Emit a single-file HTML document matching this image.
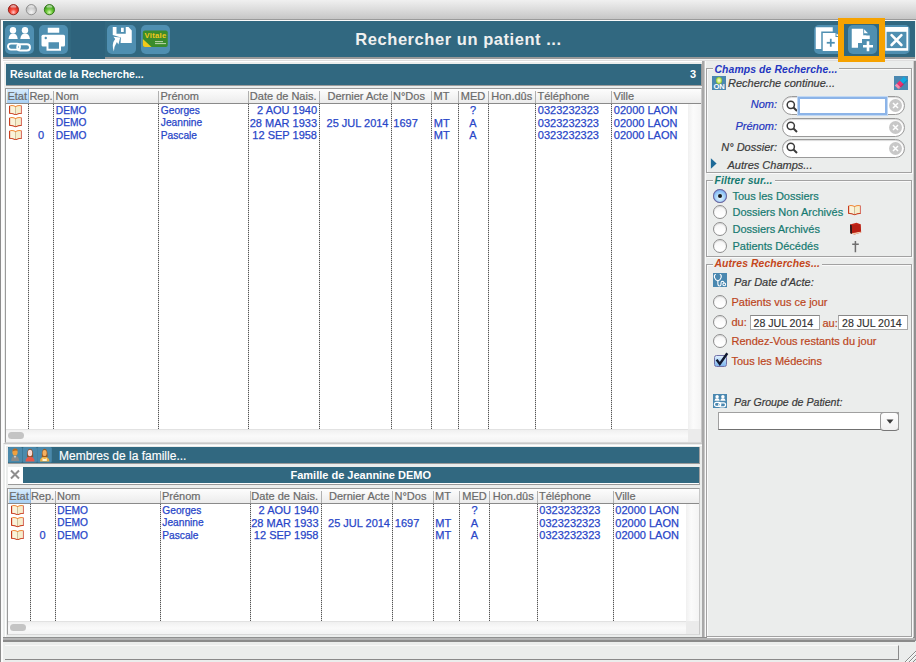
<!DOCTYPE html>
<html><head><meta charset="utf-8"><style>
*{margin:0;padding:0;box-sizing:border-box}
html,body{width:916px;height:662px;overflow:hidden;background:#ebedec;font-family:"Liberation Sans",sans-serif;font-size:11px}
.a{position:absolute}
.th{height:15px;line-height:15px;color:#6a6a6a;font-size:11px;white-space:nowrap;-webkit-text-stroke:0.2px #6a6a6a}
.thr{background:linear-gradient(#fdfdfd,#f2f2f2 60%,#e9e9e9)}
.dot{width:1px;background:repeating-linear-gradient(#555 0 1px,#d4d4d4 1px 2px)}
.row{height:12.5px;line-height:12.5px;color:#2846c8;white-space:nowrap;-webkit-text-stroke:0.25px #2846c8}
.tile{position:absolute;top:25px;width:29px;height:29px;border-radius:5px;background:#4f8fb1}
.tl{position:absolute;top:3.5px;width:12px;height:12px;border-radius:50%}
.teal{background:#316880}
.lg{position:absolute;font-weight:bold;font-style:italic;white-space:nowrap;background:#ebedec;padding:0 2px;letter-spacing:0.1px}
.fs{position:absolute;border:1px solid #a2a2a2;box-shadow:inset 1px 1px 0 #fafafa, 1px 1px 0 #fafafa}
.lbl{position:absolute;white-space:nowrap;font-style:italic;-webkit-text-stroke:0.2px currentColor}
.radio{position:absolute;width:14px;height:14px;border-radius:50%;border:1px solid #8e8e8e;background:linear-gradient(#f4f4f4,#fdfdfd 60%,#ffffff);box-shadow:inset 0 1px 1px rgba(0,0,0,.12)}
.srch{position:absolute;height:19px;border-radius:10px;border:1px solid #9a9a9a;background:#fff;box-shadow:inset 0 1px 1px rgba(0,0,0,.15)}
</style></head><body>
<div class="a" style="left:0;top:0;width:916px;height:20px;background:linear-gradient(#f0f0f0 0,#dedede 45%,#c6c6c6 100%);border-bottom:1px solid #9a9a9a"></div>
<svg class="a" style="left:0;top:0" width="60" height="20" viewBox="0 0 60 20"><defs><radialGradient id="gr" cx="50%" cy="75%" r="60%"><stop offset="0" stop-color="#ffc8c8"/><stop offset="0.5" stop-color="#f84838"/><stop offset="1" stop-color="#c82a20"/></radialGradient><radialGradient id="gg" cx="50%" cy="75%" r="60%"><stop offset="0" stop-color="#f4f4f4"/><stop offset="0.5" stop-color="#d8d8d8"/><stop offset="1" stop-color="#b8b8b8"/></radialGradient><radialGradient id="gn" cx="50%" cy="75%" r="60%"><stop offset="0" stop-color="#d8f8b8"/><stop offset="0.5" stop-color="#6cc838"/><stop offset="1" stop-color="#3c9a1a"/></radialGradient><linearGradient id="hl" x1="0" y1="0" x2="0" y2="1"><stop offset="0" stop-color="#fff" stop-opacity="0.85"/><stop offset="1" stop-color="#fff" stop-opacity="0"/></linearGradient></defs><circle cx="13.4" cy="9.7" r="5.1" fill="url(#gr)" stroke="#8c1e16" stroke-width="0.9"/><ellipse cx="13.4" cy="7" rx="3" ry="1.8" fill="url(#hl)"/><circle cx="31.3" cy="9.7" r="5.1" fill="url(#gg)" stroke="#8a8a8a" stroke-width="0.9"/><ellipse cx="31.3" cy="7" rx="3" ry="1.8" fill="url(#hl)"/><circle cx="49.4" cy="9.7" r="5.1" fill="url(#gn)" stroke="#2e6e16" stroke-width="0.9"/><ellipse cx="49.4" cy="7" rx="3" ry="1.8" fill="url(#hl)"/></svg>
<div class="a" style="left:1px;top:20px;width:915px;height:1px;background:#fafafa"></div>
<div class="a teal" style="left:2.5px;top:21px;width:912.2px;height:36px"></div>
<div class="a" style="left:2.5px;top:57px;width:912.2px;height:1.6px;background:#999"></div>
<div class="a" style="left:71px;top:20.5px;width:34px;height:38.5px;background:#2e637c"></div>
<div class="a" style="left:0;top:21px;width:916px;height:36px;text-align:center;line-height:37px;color:#f0f0f0;font-weight:bold;font-size:16.5px;letter-spacing:0.55px;padding-left:1px">Rechercher un patient ...</div>
<div class="tile" style="left:5.25px"></div>
<svg class="a" style="left:5.25px;top:25px" width="29" height="29" viewBox="0 0 29 29"><circle cx="8" cy="5.2" r="3.2" fill="#fff"/><path d="M3.5 14 Q4.2 8.6 8.1 8.6 Q12 8.6 12.75 14 Z" fill="#fff"/><circle cx="20" cy="5.2" r="3.2" fill="#fff"/><path d="M15.25 14 Q16 8.6 20.1 8.6 Q24.2 8.6 25 14 Z" fill="#fff"/><rect x="3" y="18.6" width="12" height="6" rx="3" fill="none" stroke="#fff" stroke-width="1.9"/><rect x="12.2" y="19.3" width="12.8" height="6.2" rx="3.1" fill="none" stroke="#fff" stroke-width="1.9"/></svg>
<div class="tile" style="left:39.25px"></div>
<svg class="a" style="left:39.25px;top:25px" width="29" height="29" viewBox="0 0 29 29"><rect x="8.75" y="2.75" width="11.5" height="5" fill="#fff"/><rect x="2.5" y="9.75" width="23.5" height="11.75" rx="1.5" fill="#fff"/><rect x="7.5" y="17" width="14.5" height="8.75" fill="#fff"/><rect x="9.5" y="17.25" width="10.5" height="6.5" fill="#4f8fb1"/><circle cx="6.75" cy="13" r="1.2" fill="#4f8fb1"/></svg>
<div class="tile" style="left:107.25px"></div>
<svg class="a" style="left:107.25px;top:25px" width="29" height="29" viewBox="0 0 29 29"><path d="M5.75 2 L21.5 2 L24.75 5.5 L24.75 18 L13.6 18 L13.9 12.4 L5.75 10 Z" fill="#fff"/><path d="M9.5 2 L18.75 2 L18.75 8.75 L9.5 8.75 Z" fill="#4f8fb1"/><rect x="14" y="2.75" width="2.75" height="4.25" fill="#fff"/><path d="M13.2 12.5 L6.4 11.7 L8.2 14.1 Q4.2 19 6.9 26.6 Q7 21.2 9.9 16.9 L11.4 19.6 Z" fill="#fff"/></svg>
<div class="tile" style="left:141.25px"></div>
<svg class="a" style="left:141.25px;top:25px" width="29" height="29" viewBox="0 0 29 29"><rect x="1.85" y="5.4" width="24.9" height="16.6" rx="2" fill="#3a8c2c"/><path d="M1.85 14 L10.5 22 L3.85 22 Q1.85 22 1.85 20 Z" fill="#f2c81a"/><text x="14.5" y="13.4" text-anchor="middle" font-family="Liberation Sans" font-weight="bold" font-size="7.6" fill="#f2c81a" letter-spacing="0.3">Vitale</text><rect x="14" y="16.2" width="8" height="0.9" fill="#cfe0c0"/><rect x="14" y="18.2" width="11" height="0.9" fill="#cfe0c0"/></svg>
<div class="tile" style="left:814.25px"></div>
<svg class="a" style="left:814.25px;top:25px" width="29" height="29" viewBox="0 0 29 29"><rect x="1.75" y="2.25" width="17" height="21.75" fill="#fff"/><path d="M7.25 6.5 L22 6.5 L27 11 L27 27 L7.25 27 Z" fill="#4f8fb1"/><path d="M8.75 8 L21.5 8 L21.5 12 L26 12 L26 26 L8.75 26 Z" fill="#fff"/><path d="M22.5 8.5 L25.5 11 L22.5 11 Z" fill="#fff"/><rect x="12.75" y="16.9" width="8" height="1.75" fill="#4f8fb1"/><rect x="15.9" y="13.75" width="1.75" height="8" fill="#4f8fb1"/></svg>
<div class="tile" style="left:847.75px"></div>
<svg class="a" style="left:847.75px;top:25px" width="29" height="29" viewBox="0 0 29 29"><path d="M3.75 3.75 L15.25 3.75 L15.25 10.5 L18.25 10.5 L18.25 14 L14 14 L14 18 L10 18 L10 22.75 L3.75 22.75 Z" fill="#fff"/><path d="M16.1 4.3 L20 8.2 L16.1 8.2 Z" fill="#fff"/><path d="M15 21.2 L25 21.2 M20 16.2 L20 26.2" stroke="#fff" stroke-width="2.6"/><rect x="15.25" y="10.5" width="6.5" height="3.5" fill="#fff"/></svg>
<div class="tile" style="left:880.75px"></div>
<svg class="a" style="left:880.75px;top:25px" width="29" height="29" viewBox="0 0 29 29"><rect x="4.25" y="2" width="23" height="23.75" fill="#fff"/><rect x="5.6" y="6.8" width="19.8" height="16.3" fill="#4f8fb1"/><path d="M10.6 10.2 L20.4 20 M20.4 10.2 L10.6 20" stroke="#fff" stroke-width="2.6" stroke-linecap="round"/></svg>
<div class="a" style="left:0;top:59px;width:916px;height:1px;background:#f6f6f6"></div>
<div class="a" style="left:0;top:60px;width:916px;height:1px;background:#dedede"></div>
<div class="a" style="left:3px;top:61px;width:700px;height:383px;border-top:1px solid #fff;border-left:1px solid #fff;border-right:1px solid #bdbdbd;border-bottom:1px solid #c8c8c8"></div>
<div class="a teal" style="left:6px;top:64px;width:696px;height:21.5px;border-right:1px solid #9c9c9c;border-bottom:1.5px solid #9c9c9c"></div>
<div class="a" style="left:10px;top:64px;height:20px;line-height:20px;color:#fff;font-weight:bold;font-size:10.5px">Résultat de la Recherche...</div>
<div class="a" style="left:680px;top:64px;width:16px;height:20px;line-height:20px;color:#fff;font-weight:bold;font-size:11px;text-align:right">3</div>
<div class="a" style="left:5px;top:88px;width:697px;height:354.5px;border:1px solid #9a9a9a;border-right-color:#c8c8c8;border-bottom-color:#d8d8d8;background:#fff"></div>
<div class="a thr" style="left:6px;top:89px;width:695px;height:15px"></div>
<div class="a" style="left:6.5px;top:89px;width:22.5px;height:14px;background:linear-gradient(#d8ecfc,#a8d0f4);border-right:1px solid #90b8e0"></div>
<div class="a th" style="left:6px;width:22.5px;text-align:center;top:89px">Etat</div>
<div class="a th" style="left:28.5px;width:25.0px;text-align:center;top:89px">Rep.</div>
<div class="a th" style="left:55.5px;top:89px">Nom</div>
<div class="a th" style="left:160.5px;top:89px">Prénom</div>
<div class="a th" style="left:248.5px;width:68.0px;text-align:right;top:89px">Date de Nais.</div>
<div class="a th" style="left:319.5px;width:68.5px;text-align:right;top:89px">Dernier Acte</div>
<div class="a th" style="left:393px;top:89px">N°Dos</div>
<div class="a th" style="left:433.5px;top:89px">MT</div>
<div class="a th" style="left:458px;width:30px;text-align:center;top:89px">MED</div>
<div class="a th" style="left:488px;width:47.5px;text-align:center;top:89px">Hon.dûs</div>
<div class="a th" style="left:537.5px;top:89px">Téléphone</div>
<div class="a th" style="left:613.5px;top:89px">Ville</div>
<div class="a" style="left:53.0px;top:91px;width:1px;height:12px;background:#b0b0b0"></div>
<div class="a" style="left:158.0px;top:91px;width:1px;height:12px;background:#b0b0b0"></div>
<div class="a" style="left:248.0px;top:91px;width:1px;height:12px;background:#b0b0b0"></div>
<div class="a" style="left:319.0px;top:91px;width:1px;height:12px;background:#b0b0b0"></div>
<div class="a" style="left:390.5px;top:91px;width:1px;height:12px;background:#b0b0b0"></div>
<div class="a" style="left:431.0px;top:91px;width:1px;height:12px;background:#b0b0b0"></div>
<div class="a" style="left:457.5px;top:91px;width:1px;height:12px;background:#b0b0b0"></div>
<div class="a" style="left:487.5px;top:91px;width:1px;height:12px;background:#b0b0b0"></div>
<div class="a" style="left:535.0px;top:91px;width:1px;height:12px;background:#b0b0b0"></div>
<div class="a" style="left:611.0px;top:91px;width:1px;height:12px;background:#b0b0b0"></div>
<div class="a" style="left:6px;top:103px;width:695px;height:1px;background:#8a8a8a"></div>
<div class="a" style="left:688px;top:104px;width:13px;height:324.5px;background:linear-gradient(90deg,#f0f0f0,#fbfbfb 40%,#f4f4f4)"></div>
<div class="a" style="left:6px;top:428.5px;width:695px;height:13px;background:linear-gradient(#f0f0f0,#fafafa 50%,#f3f3f3);border-top:1px solid #e2e2e2"></div>
<div class="a" style="left:688px;top:428.5px;width:13px;height:13px;background:#ebebeb"></div>
<div class="a" style="left:8px;top:431.5px;width:16px;height:7px;border-radius:4px;background:#c4c4c4"></div>
<div class="a dot" style="left:28.0px;top:104px;height:324.5px"></div>
<div class="a dot" style="left:53.0px;top:104px;height:324.5px"></div>
<div class="a dot" style="left:158.0px;top:104px;height:324.5px"></div>
<div class="a dot" style="left:248.0px;top:104px;height:324.5px"></div>
<div class="a dot" style="left:319.0px;top:104px;height:324.5px"></div>
<div class="a dot" style="left:390.5px;top:104px;height:324.5px"></div>
<div class="a dot" style="left:431.0px;top:104px;height:324.5px"></div>
<div class="a dot" style="left:457.5px;top:104px;height:324.5px"></div>
<div class="a dot" style="left:487.5px;top:104px;height:324.5px"></div>
<div class="a dot" style="left:535.0px;top:104px;height:324.5px"></div>
<div class="a dot" style="left:611.0px;top:104px;height:324.5px"></div>
<svg class="a" style="left:8.8px;top:104.7px" width="13.2" height="10.4" viewBox="0 0 13 10.2"><path d="M0 0.8 L0 8.6 Q3.5 8.6 6.5 10.2 Q9.5 8.6 13 8.6 L13 0.8 L11.6 0.8 L11.6 7.6 Q9 7.6 6.5 8.6 Q4 7.6 1.4 7.6 L1.4 0.8 Z" fill="#c83c1c"/><path d="M11.6 0.8 L13 0.8 L13 8.6 L11.6 8.2 Z" fill="#d87468"/><path d="M1.4 0.7 Q4 0.1 6.5 1.6 L6.5 9 Q4 7.7 1.4 7.8 Z" fill="#faf3da"/><path d="M11.6 0.7 Q9 0.1 6.5 1.6 L6.5 9 Q9 7.7 11.6 7.8 Z" fill="#f6eecc"/><rect x="6.1" y="1.6" width="0.8" height="7.3" fill="#c4b48c"/><path d="M1.2 0.7 Q4 0.1 6.5 1.6 Q9 0.1 11.8 0.7" stroke="#f08a3a" stroke-width="1" fill="none"/></svg>
<div class="a row" style="left:55.8px;top:104.7px;font-size:10.2px">DEMO</div>
<div class="a row" style="left:160.8px;top:104.7px;font-size:10.2px">Georges</div>
<div class="a row" style="left:248.5px;top:104.0px;width:68.5px;text-align:right">2 AOU 1940</div>
<div class="a row" style="left:458px;top:104.0px;width:30px;text-align:center">?</div>
<div class="a row" style="left:537.8px;top:104.0px">0323232323</div>
<div class="a row" style="left:613.8px;top:104.0px">02000 LAON</div>
<svg class="a" style="left:8.8px;top:117.2px" width="13.2" height="10.4" viewBox="0 0 13 10.2"><path d="M0 0.8 L0 8.6 Q3.5 8.6 6.5 10.2 Q9.5 8.6 13 8.6 L13 0.8 L11.6 0.8 L11.6 7.6 Q9 7.6 6.5 8.6 Q4 7.6 1.4 7.6 L1.4 0.8 Z" fill="#c83c1c"/><path d="M11.6 0.8 L13 0.8 L13 8.6 L11.6 8.2 Z" fill="#d87468"/><path d="M1.4 0.7 Q4 0.1 6.5 1.6 L6.5 9 Q4 7.7 1.4 7.8 Z" fill="#faf3da"/><path d="M11.6 0.7 Q9 0.1 6.5 1.6 L6.5 9 Q9 7.7 11.6 7.8 Z" fill="#f6eecc"/><rect x="6.1" y="1.6" width="0.8" height="7.3" fill="#c4b48c"/><path d="M1.2 0.7 Q4 0.1 6.5 1.6 Q9 0.1 11.8 0.7" stroke="#f08a3a" stroke-width="1" fill="none"/></svg>
<div class="a row" style="left:55.8px;top:117.2px;font-size:10.2px">DEMO</div>
<div class="a row" style="left:160.8px;top:117.2px;font-size:10.2px">Jeannine</div>
<div class="a row" style="left:248.5px;top:116.5px;width:68.5px;text-align:right">28 MAR 1933</div>
<div class="a row" style="left:319.5px;top:116.5px;width:69.0px;text-align:right">25 JUL 2014</div>
<div class="a row" style="left:393.3px;top:116.5px">1697</div>
<div class="a row" style="left:433.8px;top:116.5px">MT</div>
<div class="a row" style="left:458px;top:116.5px;width:30px;text-align:center">A</div>
<div class="a row" style="left:537.8px;top:116.5px">0323232323</div>
<div class="a row" style="left:613.8px;top:116.5px">02000 LAON</div>
<svg class="a" style="left:8.8px;top:129.7px" width="13.2" height="10.4" viewBox="0 0 13 10.2"><path d="M0 0.8 L0 8.6 Q3.5 8.6 6.5 10.2 Q9.5 8.6 13 8.6 L13 0.8 L11.6 0.8 L11.6 7.6 Q9 7.6 6.5 8.6 Q4 7.6 1.4 7.6 L1.4 0.8 Z" fill="#c83c1c"/><path d="M11.6 0.8 L13 0.8 L13 8.6 L11.6 8.2 Z" fill="#d87468"/><path d="M1.4 0.7 Q4 0.1 6.5 1.6 L6.5 9 Q4 7.7 1.4 7.8 Z" fill="#faf3da"/><path d="M11.6 0.7 Q9 0.1 6.5 1.6 L6.5 9 Q9 7.7 11.6 7.8 Z" fill="#f6eecc"/><rect x="6.1" y="1.6" width="0.8" height="7.3" fill="#c4b48c"/><path d="M1.2 0.7 Q4 0.1 6.5 1.6 Q9 0.1 11.8 0.7" stroke="#f08a3a" stroke-width="1" fill="none"/></svg>
<div class="a row" style="left:28.5px;top:129.0px;width:25.0px;text-align:center">0</div>
<div class="a row" style="left:55.8px;top:129.7px;font-size:10.2px">DEMO</div>
<div class="a row" style="left:160.8px;top:129.7px;font-size:10.2px">Pascale</div>
<div class="a row" style="left:248.5px;top:129.0px;width:68.5px;text-align:right">12 SEP 1958</div>
<div class="a row" style="left:433.8px;top:129.0px">MT</div>
<div class="a row" style="left:458px;top:129.0px;width:30px;text-align:center">A</div>
<div class="a row" style="left:537.8px;top:129.0px">0323232323</div>
<div class="a row" style="left:613.8px;top:129.0px">02000 LAON</div>
<div class="a" style="left:5px;top:444.5px;width:698px;height:194px;border-top:1px solid #fff;border-left:1px solid #fff;border-right:1px solid #a8a8a8;border-bottom:1px solid #a8a8a8"></div>
<div class="a teal" style="left:8px;top:447.2px;width:692px;height:17.2px;border-right:1.2px solid #a0a0a0;border-bottom:1.6px solid #9a9a9a"></div>
<svg class="a" style="left:8.2px;top:447.2px" width="44" height="16" viewBox="0 0 44 16"><rect x="0" y="0" width="14.2" height="15.5" rx="1.5" fill="#4b89ab"/><rect x="14.6" y="0" width="14.4" height="15.5" rx="1.5" fill="#4b89ab"/><rect x="29.2" y="0" width="14.6" height="15.5" rx="1.5" fill="#4b89ab"/><path d="M3.2 14 Q3.2 9 7 8.6 Q10.8 9 11.2 14 Z" fill="#8a8a8a"/><path d="M6 9 L7 11.5 L8 9 Z" fill="#d8d8d8"/><ellipse cx="7" cy="5.2" rx="2.6" ry="3.4" fill="#f0a040"/><path d="M4.4 4.5 Q4.6 1.6 7 1.6 Q9.6 1.6 9.6 4 Q8 2.8 4.4 4.5Z" fill="#b86820"/><path d="M17.5 14.4 Q17.8 10 22 9.8 Q26.4 10 26.6 14.4 Z" fill="#e85848"/><path d="M19 10 Q18.6 2 22 1.8 Q25.6 2 25.2 10 Z" fill="#8a5030"/><ellipse cx="22" cy="6" rx="2.2" ry="3.2" fill="#fbd8d0"/><path d="M32 14.4 Q32.2 10 36.6 9.6 Q41 10 41.4 14.4 Z" fill="#f0b040"/><path d="M34.5 11 Q36.6 13 38.8 11 L38.8 14 L34.5 14 Z" fill="#fff3d0"/><path d="M33.8 10 Q33.4 2 36.6 1.8 Q40 2 39.6 10 Z" fill="#9a5a20"/><ellipse cx="36.6" cy="6" rx="2.1" ry="3.1" fill="#f4b060"/></svg>
<div class="a" style="left:59px;top:448px;height:17px;line-height:16px;color:#fff;font-size:12px;-webkit-text-stroke:0.15px #fff">Membres de la famille...</div>
<div class="a" style="left:8px;top:466.8px;width:692px;height:18.5px;background:#fff;border-right:1.2px solid #a0a0a0;border-bottom:1.6px solid #9a9a9a"></div>
<div class="a teal" style="left:22.5px;top:466.8px;width:676.5px;height:16px"></div>
<svg class="a" style="left:8px;top:467px" width="14" height="16" viewBox="0 0 14 16"><path d="M3 3.5 L11 11.5 M11 3.5 L3 11.5" stroke="#8e8e8e" stroke-width="2"/></svg>
<div class="a" style="left:22.5px;top:467px;width:676.5px;height:16px;line-height:16px;text-align:center;color:#fff;font-weight:bold;font-size:11px">Famille de Jeannine DEMO</div>
<div class="a" style="left:7px;top:488px;width:693.4px;height:147px;border:1px solid #9a9a9a;border-right-color:#c8c8c8;border-bottom-color:#d8d8d8;background:#fff"></div>
<div class="a thr" style="left:8px;top:489px;width:691.4px;height:15px"></div>
<div class="a" style="left:8.5px;top:489px;width:22.5px;height:14px;background:linear-gradient(#d8ecfc,#a8d0f4);border-right:1px solid #90b8e0"></div>
<div class="a th" style="left:8px;width:22.0px;text-align:center;top:489px">Etat</div>
<div class="a th" style="left:30.0px;width:25.0px;text-align:center;top:489px">Rep.</div>
<div class="a th" style="left:57.0px;top:489px">Nom</div>
<div class="a th" style="left:162.0px;top:489px">Prénom</div>
<div class="a th" style="left:250.0px;width:68.0px;text-align:right;top:489px">Date de Nais.</div>
<div class="a th" style="left:321.0px;width:68.5px;text-align:right;top:489px">Dernier Acte</div>
<div class="a th" style="left:394.5px;top:489px">N°Dos</div>
<div class="a th" style="left:435.0px;top:489px">MT</div>
<div class="a th" style="left:459.5px;width:30.0px;text-align:center;top:489px">MED</div>
<div class="a th" style="left:489.5px;width:47.5px;text-align:center;top:489px">Hon.dûs</div>
<div class="a th" style="left:539.0px;top:489px">Téléphone</div>
<div class="a th" style="left:615.0px;top:489px">Ville</div>
<div class="a" style="left:54.5px;top:491px;width:1px;height:12px;background:#b0b0b0"></div>
<div class="a" style="left:159.5px;top:491px;width:1px;height:12px;background:#b0b0b0"></div>
<div class="a" style="left:249.5px;top:491px;width:1px;height:12px;background:#b0b0b0"></div>
<div class="a" style="left:320.5px;top:491px;width:1px;height:12px;background:#b0b0b0"></div>
<div class="a" style="left:392.0px;top:491px;width:1px;height:12px;background:#b0b0b0"></div>
<div class="a" style="left:432.5px;top:491px;width:1px;height:12px;background:#b0b0b0"></div>
<div class="a" style="left:459.0px;top:491px;width:1px;height:12px;background:#b0b0b0"></div>
<div class="a" style="left:489.0px;top:491px;width:1px;height:12px;background:#b0b0b0"></div>
<div class="a" style="left:536.5px;top:491px;width:1px;height:12px;background:#b0b0b0"></div>
<div class="a" style="left:612.5px;top:491px;width:1px;height:12px;background:#b0b0b0"></div>
<div class="a" style="left:8px;top:503px;width:691.4px;height:1px;background:#8a8a8a"></div>
<div class="a" style="left:686.4px;top:504px;width:13px;height:117px;background:linear-gradient(90deg,#f0f0f0,#fbfbfb 40%,#f4f4f4)"></div>
<div class="a" style="left:8px;top:621px;width:691.4px;height:13px;background:linear-gradient(#f0f0f0,#fafafa 50%,#f3f3f3);border-top:1px solid #e2e2e2"></div>
<div class="a" style="left:686.4px;top:621px;width:13px;height:13px;background:#ebebeb"></div>
<div class="a" style="left:10px;top:624px;width:16px;height:7px;border-radius:4px;background:#c4c4c4"></div>
<div class="a dot" style="left:29.5px;top:504px;height:117px"></div>
<div class="a dot" style="left:54.5px;top:504px;height:117px"></div>
<div class="a dot" style="left:159.5px;top:504px;height:117px"></div>
<div class="a dot" style="left:249.5px;top:504px;height:117px"></div>
<div class="a dot" style="left:320.5px;top:504px;height:117px"></div>
<div class="a dot" style="left:392.0px;top:504px;height:117px"></div>
<div class="a dot" style="left:432.5px;top:504px;height:117px"></div>
<div class="a dot" style="left:459.0px;top:504px;height:117px"></div>
<div class="a dot" style="left:489.0px;top:504px;height:117px"></div>
<div class="a dot" style="left:536.5px;top:504px;height:117px"></div>
<div class="a dot" style="left:612.5px;top:504px;height:117px"></div>
<svg class="a" style="left:10.8px;top:504.7px" width="13.2" height="10.4" viewBox="0 0 13 10.2"><path d="M0 0.8 L0 8.6 Q3.5 8.6 6.5 10.2 Q9.5 8.6 13 8.6 L13 0.8 L11.6 0.8 L11.6 7.6 Q9 7.6 6.5 8.6 Q4 7.6 1.4 7.6 L1.4 0.8 Z" fill="#c83c1c"/><path d="M11.6 0.8 L13 0.8 L13 8.6 L11.6 8.2 Z" fill="#d87468"/><path d="M1.4 0.7 Q4 0.1 6.5 1.6 L6.5 9 Q4 7.7 1.4 7.8 Z" fill="#faf3da"/><path d="M11.6 0.7 Q9 0.1 6.5 1.6 L6.5 9 Q9 7.7 11.6 7.8 Z" fill="#f6eecc"/><rect x="6.1" y="1.6" width="0.8" height="7.3" fill="#c4b48c"/><path d="M1.2 0.7 Q4 0.1 6.5 1.6 Q9 0.1 11.8 0.7" stroke="#f08a3a" stroke-width="1" fill="none"/></svg>
<div class="a row" style="left:57.3px;top:504.7px;font-size:10.2px">DEMO</div>
<div class="a row" style="left:162.3px;top:504.7px;font-size:10.2px">Georges</div>
<div class="a row" style="left:250.0px;top:504.0px;width:68.5px;text-align:right">2 AOU 1940</div>
<div class="a row" style="left:459.5px;top:504.0px;width:30.0px;text-align:center">?</div>
<div class="a row" style="left:539.3px;top:504.0px">0323232323</div>
<div class="a row" style="left:615.3px;top:504.0px">02000 LAON</div>
<svg class="a" style="left:10.8px;top:517.2px" width="13.2" height="10.4" viewBox="0 0 13 10.2"><path d="M0 0.8 L0 8.6 Q3.5 8.6 6.5 10.2 Q9.5 8.6 13 8.6 L13 0.8 L11.6 0.8 L11.6 7.6 Q9 7.6 6.5 8.6 Q4 7.6 1.4 7.6 L1.4 0.8 Z" fill="#c83c1c"/><path d="M11.6 0.8 L13 0.8 L13 8.6 L11.6 8.2 Z" fill="#d87468"/><path d="M1.4 0.7 Q4 0.1 6.5 1.6 L6.5 9 Q4 7.7 1.4 7.8 Z" fill="#faf3da"/><path d="M11.6 0.7 Q9 0.1 6.5 1.6 L6.5 9 Q9 7.7 11.6 7.8 Z" fill="#f6eecc"/><rect x="6.1" y="1.6" width="0.8" height="7.3" fill="#c4b48c"/><path d="M1.2 0.7 Q4 0.1 6.5 1.6 Q9 0.1 11.8 0.7" stroke="#f08a3a" stroke-width="1" fill="none"/></svg>
<div class="a row" style="left:57.3px;top:517.2px;font-size:10.2px">DEMO</div>
<div class="a row" style="left:162.3px;top:517.2px;font-size:10.2px">Jeannine</div>
<div class="a row" style="left:250.0px;top:516.5px;width:68.5px;text-align:right">28 MAR 1933</div>
<div class="a row" style="left:321.0px;top:516.5px;width:69.0px;text-align:right">25 JUL 2014</div>
<div class="a row" style="left:394.8px;top:516.5px">1697</div>
<div class="a row" style="left:435.3px;top:516.5px">MT</div>
<div class="a row" style="left:459.5px;top:516.5px;width:30.0px;text-align:center">A</div>
<div class="a row" style="left:539.3px;top:516.5px">0323232323</div>
<div class="a row" style="left:615.3px;top:516.5px">02000 LAON</div>
<svg class="a" style="left:10.8px;top:529.7px" width="13.2" height="10.4" viewBox="0 0 13 10.2"><path d="M0 0.8 L0 8.6 Q3.5 8.6 6.5 10.2 Q9.5 8.6 13 8.6 L13 0.8 L11.6 0.8 L11.6 7.6 Q9 7.6 6.5 8.6 Q4 7.6 1.4 7.6 L1.4 0.8 Z" fill="#c83c1c"/><path d="M11.6 0.8 L13 0.8 L13 8.6 L11.6 8.2 Z" fill="#d87468"/><path d="M1.4 0.7 Q4 0.1 6.5 1.6 L6.5 9 Q4 7.7 1.4 7.8 Z" fill="#faf3da"/><path d="M11.6 0.7 Q9 0.1 6.5 1.6 L6.5 9 Q9 7.7 11.6 7.8 Z" fill="#f6eecc"/><rect x="6.1" y="1.6" width="0.8" height="7.3" fill="#c4b48c"/><path d="M1.2 0.7 Q4 0.1 6.5 1.6 Q9 0.1 11.8 0.7" stroke="#f08a3a" stroke-width="1" fill="none"/></svg>
<div class="a row" style="left:30.0px;top:529.0px;width:25.0px;text-align:center">0</div>
<div class="a row" style="left:57.3px;top:529.7px;font-size:10.2px">DEMO</div>
<div class="a row" style="left:162.3px;top:529.7px;font-size:10.2px">Pascale</div>
<div class="a row" style="left:250.0px;top:529.0px;width:68.5px;text-align:right">12 SEP 1958</div>
<div class="a row" style="left:435.3px;top:529.0px">MT</div>
<div class="a row" style="left:459.5px;top:529.0px;width:30.0px;text-align:center">A</div>
<div class="a row" style="left:539.3px;top:529.0px">0323232323</div>
<div class="a row" style="left:615.3px;top:529.0px">02000 LAON</div>
<div class="a" style="left:702px;top:61px;width:1.6px;height:577px;background:#a8a8a8"></div>
<div class="a" style="left:703.6px;top:61px;width:1.6px;height:577px;background:#c8c8c8"></div>
<div class="a" style="left:705.2px;top:61px;width:1px;height:577px;background:#fafafa"></div>
<div class="a" style="left:913px;top:61px;width:3px;height:580px;background:linear-gradient(90deg,#d0d0d0 0,#d0d0d0 30%,#8e8e8e 45%,#8e8e8e 80%,#a8a8a8 100%)"></div>
<div class="a" style="left:3px;top:636.5px;width:912px;height:5px;background:linear-gradient(#8e8e8e 0,#8e8e8e 20%,#b8b8b8 20%,#b0b0b0 60%,#8a8a8a 60%,#8a8a8a 100%)"></div>
<div class="a" style="left:0;top:19px;width:1px;height:643px;background:#8c8c8c"></div>
<div class="a" style="left:1px;top:21px;width:1.5px;height:641px;background:#fbfbfb"></div>
<div class="a" style="left:2.5px;top:641.5px;width:913.5px;height:20.5px;background:#ebedec"></div>
<div class="a" style="left:5px;top:645px;width:894px;height:15px;border-top:1px solid #f8f8f8;border-right:1.5px solid #8a8a8a;border-bottom:1.5px solid #8a8a8a;background:#ebedec"></div>
<svg class="a" style="left:903px;top:650px" width="13" height="12" viewBox="0 0 13 12"><path d="M2 12 L13 1 M6 12 L13 5 M10 12 L13 9" stroke="#8a8a8a" stroke-width="1"/><path d="M3 12 L13 2 M7 12 L13 6" stroke="#fff" stroke-width="0.8"/></svg>
<div class="fs" style="left:706.2px;top:68.4px;width:205.6px;height:104.8px"></div>
<div class="lg" style="left:712.5px;top:63.5px;color:#2436c0;font-size:10.4px">Champs de Recherche...</div>
<div class="fs" style="left:706.2px;top:180px;width:205.6px;height:76.5px"></div>
<div class="lg" style="left:712.5px;top:175.3px;color:#167a70;font-size:10.4px">Filtrer sur...</div>
<div class="fs" style="left:706.2px;top:264px;width:205.6px;height:372.8px"></div>
<div class="lg" style="left:712.5px;top:257.5px;color:#c4461a;font-size:10.4px">Autres Recherches...</div>
<div class="a" style="left:712px;top:76px;width:14px;height:14px;background:#4a88b0"></div>
<div class="a" style="left:715.8px;top:77px;width:6.6px;height:6.6px;border-radius:50%;background:radial-gradient(#ffffe8 0,#d8f090 35%,#90c828 70%,#6aa818 100%)"></div>
<div class="a" style="left:712px;top:83.2px;width:14px;height:8px;line-height:8px;font-size:7.6px;color:#fff;text-align:center;font-weight:bold;letter-spacing:-0.2px">ON</div>
<div class="lbl" style="left:728px;top:77px;color:#3a3a3a;font-size:11px">Recherche continue...</div>
<div class="a" style="left:893.5px;top:76px;width:14.5px;height:14px;background:#4a88b0"></div>
<svg class="a" style="left:893.5px;top:76px" width="15" height="14" viewBox="0 0 15 14"><g transform="rotate(-45 7.2 7)"><rect x="0.8" y="4.3" width="3" height="5.6" fill="#f890b0"/><rect x="3.8" y="4.3" width="4.4" height="5.6" fill="#ee3070"/><rect x="8.2" y="4.3" width="5.6" height="5.6" fill="#10a8e0"/><rect x="0.8" y="8.6" width="13" height="1.3" fill="#000" opacity="0.15"/></g></svg>
<div class="lbl" style="left:700px;width:77px;text-align:right;top:98.3px;color:#2436c0;font-size:11px">Nom:</div>
<div class="srch" style="left:781.5px;top:96.3px;width:123px"></div>
<svg class="a" style="left:786px;top:99.8px" width="12" height="12" viewBox="0 0 12 12"><circle cx="4.8" cy="4.8" r="3.6" fill="none" stroke="#3a3a3a" stroke-width="1.5"/><path d="M7.5 7.5 L11 11" stroke="#3a3a3a" stroke-width="2"/></svg>
<div class="a" style="left:889px;top:99.3px;width:13px;height:13px;border-radius:50%;background:#c8c8c8"></div>
<svg class="a" style="left:889px;top:99.3px" width="13" height="13" viewBox="0 0 13 13"><path d="M4 4 L9 9 M9 4 L4 9" stroke="#fff" stroke-width="1.5"/></svg>
<div class="lbl" style="left:700px;width:77px;text-align:right;top:119.5px;color:#2436c0;font-size:11px">Prénom:</div>
<div class="srch" style="left:781.5px;top:117.5px;width:123px"></div>
<svg class="a" style="left:786px;top:121.0px" width="12" height="12" viewBox="0 0 12 12"><circle cx="4.8" cy="4.8" r="3.6" fill="none" stroke="#3a3a3a" stroke-width="1.5"/><path d="M7.5 7.5 L11 11" stroke="#3a3a3a" stroke-width="2"/></svg>
<div class="a" style="left:889px;top:120.5px;width:13px;height:13px;border-radius:50%;background:#c8c8c8"></div>
<svg class="a" style="left:889px;top:120.5px" width="13" height="13" viewBox="0 0 13 13"><path d="M4 4 L9 9 M9 4 L4 9" stroke="#fff" stroke-width="1.5"/></svg>
<div class="lbl" style="left:700px;width:77px;text-align:right;top:140.7px;color:#3a3a3a;font-size:11px">N° Dossier:</div>
<div class="srch" style="left:781.5px;top:138.7px;width:123px"></div>
<svg class="a" style="left:786px;top:142.2px" width="12" height="12" viewBox="0 0 12 12"><circle cx="4.8" cy="4.8" r="3.6" fill="none" stroke="#3a3a3a" stroke-width="1.5"/><path d="M7.5 7.5 L11 11" stroke="#3a3a3a" stroke-width="2"/></svg>
<div class="a" style="left:889px;top:141.7px;width:13px;height:13px;border-radius:50%;background:#c8c8c8"></div>
<svg class="a" style="left:889px;top:141.7px" width="13" height="13" viewBox="0 0 13 13"><path d="M4 4 L9 9 M9 4 L4 9" stroke="#fff" stroke-width="1.5"/></svg>
<div class="a" style="left:797.5px;top:97px;width:89px;height:18px;border:2px solid #8cb4e8;background:#fff;box-shadow:0 0 0 1px #c0d8f4"></div>
<svg class="a" style="left:710px;top:158.3px" width="8" height="11" viewBox="0 0 8 11"><path d="M0.9 0.3 L6.6 5.5 L0.9 10.8 Z" fill="#1e6a98"/></svg>
<div class="lbl" style="left:727.5px;top:159px;color:#3a3a3a;font-size:11px">Autres Champs...</div>
<div class="radio" style="left:712.5px;top:188.5px"></div>
<div class="a" style="left:732.5px;top:188.5px;line-height:14px;color:#167a70;font-size:11px;white-space:nowrap;-webkit-text-stroke:0.2px #167a70">Tous les Dossiers</div>
<div class="radio" style="left:712.5px;top:205.4px"></div>
<div class="a" style="left:732.5px;top:205.4px;line-height:14px;color:#167a70;font-size:11px;white-space:nowrap;-webkit-text-stroke:0.2px #167a70">Dossiers Non Archivés</div>
<div class="radio" style="left:712.5px;top:222.3px"></div>
<div class="a" style="left:732.5px;top:222.3px;line-height:14px;color:#167a70;font-size:11px;white-space:nowrap;-webkit-text-stroke:0.2px #167a70">Dossiers Archivés</div>
<div class="radio" style="left:712.5px;top:239.2px"></div>
<div class="a" style="left:732.5px;top:239.2px;line-height:14px;color:#167a70;font-size:11px;white-space:nowrap;-webkit-text-stroke:0.2px #167a70">Patients Décédés</div>
<div class="a" style="left:712.8px;top:188.9px;width:14.2px;height:14px;border-radius:50%;border:1px solid #6a68a8;background:radial-gradient(circle at 50% 65%,#e8f6ff 0,#a8d4f8 45%,#70aaf0 85%,#6a90d0 100%)"></div>
<div class="a" style="left:717.5px;top:193.5px;width:4px;height:4px;border-radius:50%;background:#1a1a1a"></div>
<svg class="a" style="left:848.3px;top:205.2px" width="13.2" height="10.4" viewBox="0 0 13 10.2"><path d="M0 0.8 L0 8.6 Q3.5 8.6 6.5 10.2 Q9.5 8.6 13 8.6 L13 0.8 L11.6 0.8 L11.6 7.6 Q9 7.6 6.5 8.6 Q4 7.6 1.4 7.6 L1.4 0.8 Z" fill="#c83c1c"/><path d="M11.6 0.8 L13 0.8 L13 8.6 L11.6 8.2 Z" fill="#d87468"/><path d="M1.4 0.7 Q4 0.1 6.5 1.6 L6.5 9 Q4 7.7 1.4 7.8 Z" fill="#faf3da"/><path d="M11.6 0.7 Q9 0.1 6.5 1.6 L6.5 9 Q9 7.7 11.6 7.8 Z" fill="#f6eecc"/><rect x="6.1" y="1.6" width="0.8" height="7.3" fill="#c4b48c"/><path d="M1.2 0.7 Q4 0.1 6.5 1.6 Q9 0.1 11.8 0.7" stroke="#f08a3a" stroke-width="1" fill="none"/></svg>
<svg class="a" style="left:848.5px;top:222px" width="13" height="13" viewBox="0 0 13 13"><path d="M1 2.5 L7.5 0.8 L11.5 2.2 L12.2 10.5 L5.5 12.6 L1.3 11.2 Z" fill="#c4281a"/><path d="M1 2.5 L2.8 3.2 L3.2 12 L1.3 11.2 Z" fill="#2a1a1a"/><path d="M3.2 11 L11.8 9.5 L12.2 10.5 L5.5 12.6 L3.2 12 Z" fill="#f4c8a8"/><path d="M3 3.2 L11.5 2.2 L11.8 9.5 L3.2 11 Z" fill="#b82014"/></svg>
<svg class="a" style="left:851px;top:240px" width="9" height="13" viewBox="0 0 9 13"><path d="M4.4 1 L4.4 12.2 M1.2 4.3 L7.8 4.3" stroke="#6e6e6e" stroke-width="1.5"/></svg>
<div class="a" style="left:712.8px;top:272.8px;width:14.2px;height:14.2px;background:#4a88b0"></div>
<svg class="a" style="left:712.8px;top:272.8px" width="14.2" height="14.2" viewBox="0 0 14 14"><path d="M2.4 1.5 Q0.9 2 1.5 4.5 Q2.4 7.2 4.8 7.8 Q7.1 7.2 8 4.5 Q8.6 2 7.1 1.5 M4.8 7.8 L4.8 11 Q4.9 12.8 6.4 12.8 Q7.9 12.8 7.9 11 L7.9 9.8 Q8 8.2 9.3 8.2 Q10.6 8.3 10.9 9.8" fill="none" stroke="#fff" stroke-width="1.1" stroke-linecap="round"/><circle cx="11.1" cy="11.2" r="1.4" fill="none" stroke="#fff" stroke-width="1"/></svg>
<div class="lbl" style="left:734px;top:276px;color:#3a3a3a;font-size:11px">Par Date d'Acte:</div>
<div class="radio" style="left:713.4px;top:295.2px"></div>
<div class="a" style="left:731.5px;top:295.2px;line-height:14px;color:#bc461c;font-size:11px;white-space:nowrap;-webkit-text-stroke:0.2px #bc461c">Patients vus ce jour</div>
<div class="radio" style="left:713.4px;top:315.2px"></div>
<div class="a" style="left:731.5px;top:315.2px;line-height:14px;color:#bc461c;font-size:11px;white-space:nowrap;-webkit-text-stroke:0.2px #bc461c">du:</div>
<div class="radio" style="left:713.4px;top:334px"></div>
<div class="a" style="left:731.5px;top:334px;line-height:14px;color:#bc461c;font-size:11px;white-space:nowrap;-webkit-text-stroke:0.2px #bc461c">Rendez-Vous restants du jour</div>
<div class="a" style="left:822.5px;top:315.5px;line-height:14px;color:#bc461c;font-size:11px;-webkit-text-stroke:0.2px #bc461c">au:</div>
<div class="a" style="left:749.5px;top:314.5px;width:70.3px;height:15.5px;border:1px solid #a8a8a8;border-top:1.5px solid #888;background:#fff;line-height:14px;padding-left:3px;color:#303030;font-size:10.6px;white-space:nowrap;-webkit-text-stroke:0.15px #303030">28 JUL 2014</div>
<div class="a" style="left:838px;top:314.5px;width:69.5px;height:15.5px;border:1px solid #a8a8a8;border-top:1.5px solid #888;background:#fff;line-height:14px;padding-left:3px;color:#303030;font-size:10.6px;white-space:nowrap;-webkit-text-stroke:0.15px #303030">28 JUL 2014</div>
<div class="a" style="left:714.3px;top:355.3px;width:12.6px;height:12px;border-radius:2.5px;border:1px solid #7070a8;background:linear-gradient(#e0f0ff,#a0ccf4 60%,#80b4ec)"></div>
<svg class="a" style="left:713px;top:351px" width="16" height="17" viewBox="0 0 16 17"><path d="M3.6 8.6 L6.8 13 L14.3 2.3" fill="none" stroke="#101830" stroke-width="2.4"/></svg>
<div class="a" style="left:731.5px;top:354px;line-height:14px;color:#bc461c;font-size:11px;white-space:nowrap;-webkit-text-stroke:0.2px #bc461c">Tous les Médecins</div>
<div class="a" style="left:713px;top:393.7px;width:14px;height:14px;background:#4a88b0"></div>
<svg class="a" style="left:713px;top:393.7px" width="14" height="14" viewBox="0 0 29 29"><circle cx="8.5" cy="5.5" r="3.6" fill="#fff"/><path d="M3 14 Q3.6 9 8.5 9 Q13.4 9 14 14 Z" fill="#fff"/><circle cx="20.5" cy="5.5" r="3.6" fill="#fff"/><path d="M15 14 Q15.6 9 20.5 9 Q25.4 9 26 14 Z" fill="#fff"/><rect x="3" y="17.5" width="13" height="8" rx="4" fill="none" stroke="#fff" stroke-width="2.6"/><rect x="12" y="18.5" width="14" height="8" rx="4" fill="none" stroke="#fff" stroke-width="2.6"/></svg>
<div class="lbl" style="left:734px;top:395.5px;color:#3a3a3a;font-size:10.6px">Par Groupe de Patient:</div>
<div class="a" style="left:717.5px;top:411.8px;width:181.5px;height:18.5px;border:1px solid #a0a0a0;border-bottom-color:#707070;background:#fff"></div>
<div class="a" style="left:880.3px;top:411.5px;width:18.8px;height:19px;border:1px solid #9a9a9a;border-bottom-color:#777;border-radius:4px;background:linear-gradient(#ffffff,#f0f0f0)"></div>
<svg class="a" style="left:886px;top:418.5px" width="8" height="6" viewBox="0 0 8 6"><path d="M0.5 0.5 L7.5 0.5 L4 4.8 Z" fill="#3a3a3a"/></svg>
<div class="a" style="left:838px;top:18px;width:47px;height:43.5px;border:6.3px solid #f6a200;background:transparent"></div>
<div class="a teal" style="left:844.3px;top:24.3px;width:34.4px;height:31px"></div>
<div class="tile" style="left:847.75px"></div>
<svg class="a" style="left:847.75px;top:25px" width="29" height="29" viewBox="0 0 29 29"><path d="M3.75 3.75 L15.25 3.75 L15.25 10.5 L18.25 10.5 L18.25 14 L14 14 L14 18 L10 18 L10 22.75 L3.75 22.75 Z" fill="#fff"/><path d="M16.1 4.3 L20 8.2 L16.1 8.2 Z" fill="#fff"/><path d="M15 21.2 L25 21.2 M20 16.2 L20 26.2" stroke="#fff" stroke-width="2.6"/><rect x="15.25" y="10.5" width="6.5" height="3.5" fill="#fff"/></svg>
</body></html>
